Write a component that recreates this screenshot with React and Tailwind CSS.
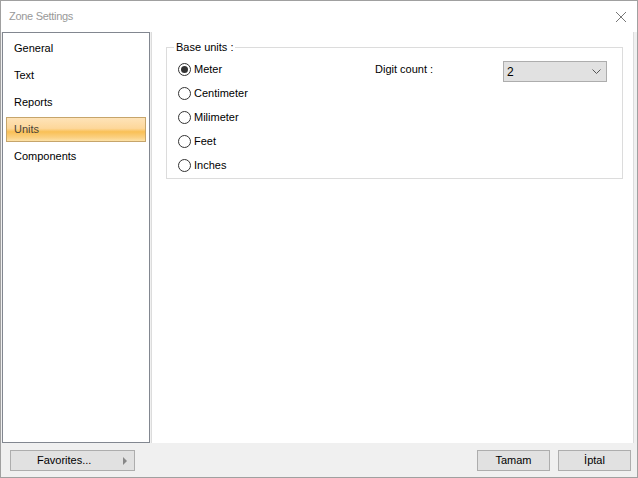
import React from 'react';

const font = { fontFamily: '"Liberation Sans", Arial, sans-serif' };

const items = ['General', 'Text', 'Reports', 'Units', 'Components'];
const units = ['Meter', 'Centimeter', 'Milimeter', 'Feet', 'Inches'];

const Radio = ({ checked, label }) => (
  <div className="flex items-center h-[24px]">
    <span className="w-[13px] h-[13px] rounded-full border border-[#333] bg-white flex items-center justify-center">
      {checked && <span className="w-[7px] h-[7px] rounded-full bg-[#333]" />}
    </span>
    <span className="ml-[3px] text-[11px] text-black">{label}</span>
  </div>
);

const Button = ({ children, className = '' }) => (
  <button className={`h-[21px] bg-[#e1e1e1] border border-[#adadad] text-[11px] text-black ${className}`}>
    {children}
  </button>
);

export default function App() {
  const [selected, setSelected] = React.useState('Units');
  const [unit, setUnit] = React.useState('Meter');

  return (
    <div style={font} className="w-[638px] h-[478px] flex flex-col border border-[#a0a0a0] bg-[#f0f0f0] overflow-hidden">
      {/* title bar */}
      <div className="h-[31px] shrink-0 bg-white flex items-center justify-between pl-[8px] pr-[10px]">
        <span className="text-[11px] text-[#999] tracking-[-0.3px]">Zone Settings</span>
        <svg width="12" height="12" viewBox="0 0 12 12">
          <path d="M1 1L11 11M11 1L1 11" stroke="#777" strokeWidth="1" />
        </svg>
      </div>

      <div className="flex flex-1 min-h-0 bg-[#f0f0f0]">
        {/* left list */}
        <div className="w-[148px] ml-[1px] h-[411px] border border-[#828790] bg-white pt-[3px] px-[3px] flex flex-col gap-[2px]">
          {items.map((it) => {
            const active = it === selected;
            return (
              <div
                key={it}
                onClick={() => setSelected(it)}
                className={`h-[25px] flex items-center pl-[7px] text-[11px] cursor-default ${
                  active
                    ? 'border border-[#c6a56b] bg-[linear-gradient(to_bottom,#fee3b8_0%,#fdd79a_45%,#f9c056_60%,#fbd183_85%,#fde2a8_100%)] text-[#4a4438]'
                    : 'border border-transparent text-black'
                }`}
              >
                {it}
              </div>
            );
          })}
        </div>

        {/* right panel */}
        <div className="ml-[1px] w-[483px] h-[411px] bg-white border-l border-r border-[#dcdcdc] pt-[9px] pl-[14px] pr-[10px]">
          <fieldset className="border border-[#dcdcdc] pl-[11px] pb-[1px] pt-0">
            <legend className="ml-[-4px] px-[2px] text-[11px] leading-[13px] text-black">Base units :</legend>
            <div className="flex pt-[3px]">
              <div className="w-[197px] flex flex-col">
                {units.map((u) => (
                  <div key={u} onClick={() => setUnit(u)}>
                    <Radio checked={unit === u} label={u} />
                  </div>
                ))}
              </div>
              <div className="w-[128px] h-[24px] flex items-center text-[11px] text-black">Digit count :</div>
              <div className="mt-[4px] w-[104px] h-[21px] bg-[#e1e1e1] border border-[#adadad] flex items-center justify-between pl-[3px] pr-[5px]">
                <span className="text-[12px] text-black">2</span>
                <svg width="9" height="6" viewBox="0 0 9 6">
                  <path d="M0.5 0.5L4.5 4.5L8.5 0.5" fill="none" stroke="#555" strokeWidth="1" />
                </svg>
              </div>
            </div>
          </fieldset>
        </div>
      </div>

      {/* footer */}
      <div className="h-[34px] shrink-0 flex items-center pl-[9px] pr-[6px]">
        <Button className="w-[125px] relative flex items-center">
          <span className="absolute left-[26px]">Favorites...</span>
          <svg width="5" height="8" viewBox="0 0 5 8" className="absolute left-[112px] top-[6px]">
            <path d="M0 0L4 4L0 8Z" fill="#888" />
          </svg>
        </Button>
        <div className="flex-1" />
        <Button className="w-[73px]">Tamam</Button>
        <Button className="w-[73px] ml-[8px]">İptal</Button>
      </div>
    </div>
  );
}
